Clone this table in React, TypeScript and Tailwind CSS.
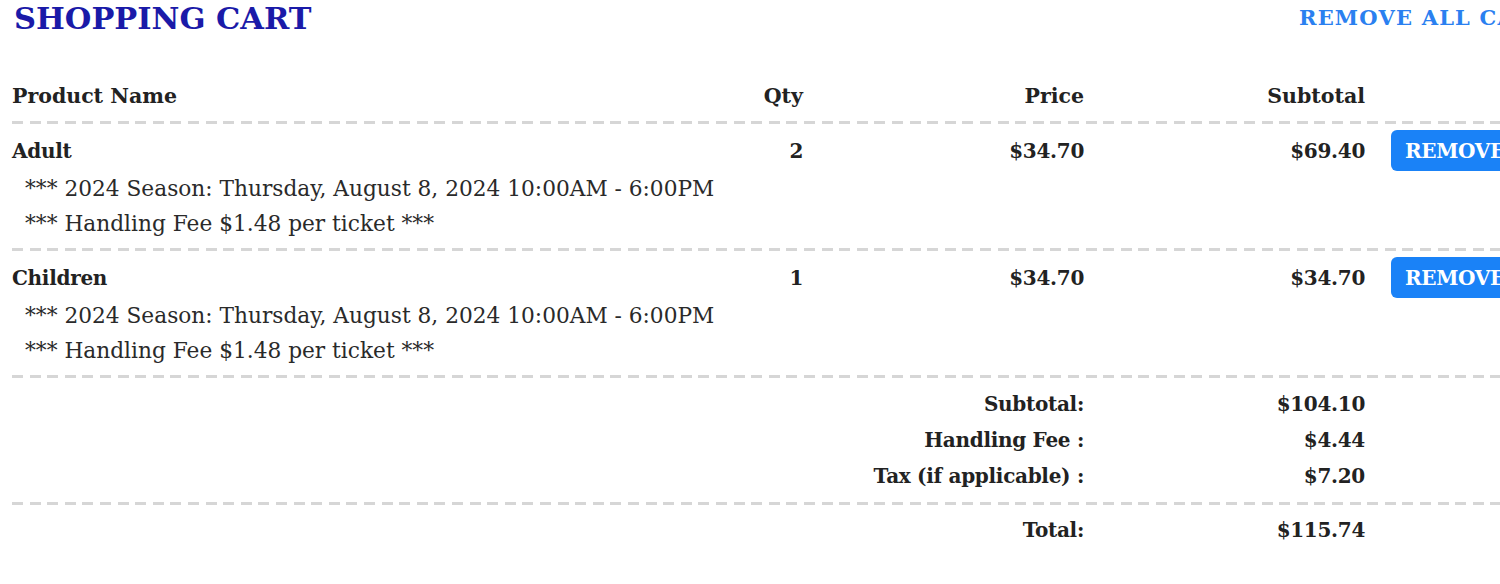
import React from 'react'

const dash =
  'h-[3px] bg-[repeating-linear-gradient(to_right,#d6d6d6_0px,#d6d6d6_11px,transparent_11px,transparent_17.6px)]'

const items = [
  { name: 'Adult', qty: 2, price: '$34.70', subtotal: '$69.40' },
  { name: 'Children', qty: 1, price: '$34.70', subtotal: '$34.70' },
]

const details = [
  '*** 2024 Season: Thursday, August 8, 2024 10:00AM - 6:00PM',
  '*** Handling Fee $1.48 per ticket ***',
]

const totals = [
  { label: 'Subtotal:', value: '$104.10' },
  { label: 'Handling Fee :', value: '$4.44' },
  { label: 'Tax (if applicable) :', value: '$7.20' },
]

const cols = 'grid grid-cols-[708px_83px_281px_281px_1fr]'

const App = () => {
  return (
    <div className="w-[1500px] h-[584px] overflow-hidden bg-white font-['DejaVu_Serif',serif] text-[#222]">
      <div className="w-[1640px] pl-3">
        <div className="flex items-center h-9">
          <h1 className="w-[1287px] shrink-0 text-[30.5px] font-bold leading-9 text-[#1a1aa8] pl-[2px]">
            SHOPPING CART
          </h1>
          <a className="text-[21px] font-bold text-[#2a80f0] tracking-[1.2px] whitespace-nowrap cursor-pointer">
            REMOVE ALL CART
          </a>
        </div>

        <div className={`${cols} mt-[42px] pb-[7px] text-[20.5px] font-bold leading-9`}>
          <div>Product Name</div>
          <div className="text-right">Qty</div>
          <div className="text-right">Price</div>
          <div className="text-right">Subtotal</div>
          <div />
        </div>
        <div className={dash} />

        {items.map((item) => (
          <div key={item.name}>
            <div className="pt-[6px] pb-[7px]">
              <div className={`${cols} h-[41px] items-center text-[20px] font-bold tracking-[-0.3px]`}>
                <div>{item.name}</div>
                <div className="text-right">{item.qty}</div>
                <div className="text-right">{item.price}</div>
                <div className="text-right">{item.subtotal}</div>
                <div className="pl-[26px]">
                  <button className="h-[41px] px-[14px] rounded-md bg-[#1a82f7] text-white text-[20px] font-bold tracking-[-0.3px]">
                    REMOVE
                  </button>
                </div>
              </div>
              {details.map((d) => (
                <div key={d} className="pl-[13px] text-[21.7px] leading-[35px] text-[#2a2a2a] whitespace-nowrap">
                  {d}
                </div>
              ))}
            </div>
            <div className={dash} />
          </div>
        ))}

        <div className="pt-2 pb-2">
          {totals.map((t) => (
            <div key={t.label} className={`${cols} text-[20px] font-bold leading-9 tracking-[-0.3px]`}>
              <div />
              <div />
              <div className="text-right whitespace-nowrap">{t.label}</div>
              <div className="text-right">{t.value}</div>
              <div />
            </div>
          ))}
        </div>
        <div className={dash} />

        <div className={`${cols} pt-[7px] text-[20px] font-bold leading-9 tracking-[-0.3px]`}>
          <div />
          <div />
          <div className="text-right">Total:</div>
          <div className="text-right">$115.74</div>
          <div />
        </div>
      </div>
    </div>
  )
}

export default App
